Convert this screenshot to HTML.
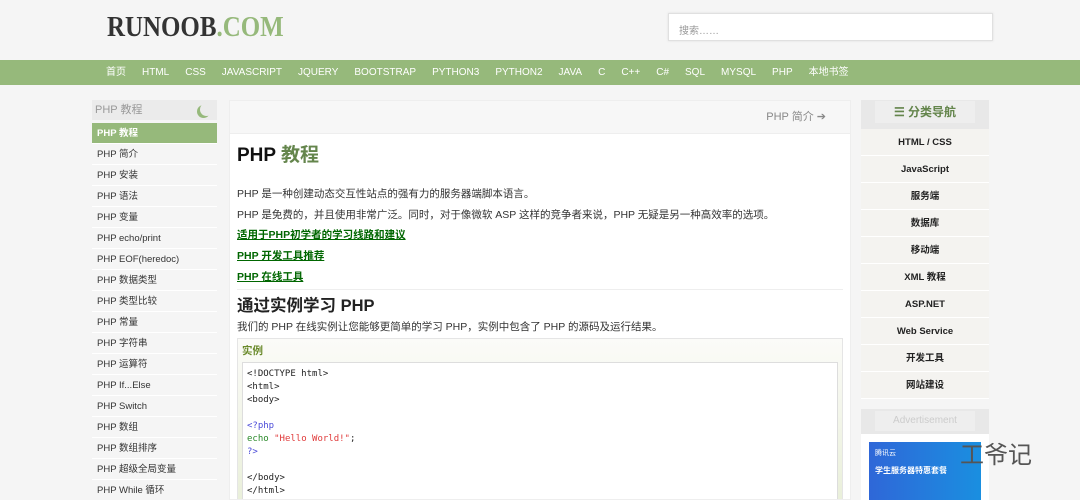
<!DOCTYPE html>
<html><head><meta charset="utf-8"><style>
*{margin:0;padding:0;box-sizing:border-box}
html,body{width:1080px;height:500px;overflow:hidden}
body{background:#f5f5f5;font-family:"Liberation Sans","Noto Sans CJK SC",sans-serif;font-size:12px;color:#333;position:relative}
.logo{position:absolute;left:107px;top:11px;font-family:"Liberation Serif","Noto Serif CJK SC",serif;font-weight:bold;font-size:29px;color:#333;transform:scaleX(0.86);transform-origin:left top}
.logo span{color:#96b97b}
.search{position:absolute;left:668px;top:13px;width:325px;height:28px;background:#fff;border:1px solid #e0e0e0;box-shadow:0 0 2px #ddd;font-size:10px;color:#999;padding:8px 10px}
.nav{position:absolute;left:0;top:60px;width:1080px;height:25px;background:#96b97b;color:#fff;font-size:10px;line-height:25px;white-space:nowrap;padding-left:106px}
.nav span{margin-right:16px}
.left{position:absolute;left:92px;top:100px;width:125px}
.left .hd{height:20px;background:#ebebeb;color:#999;font-size:11px;line-height:20px;padding-left:3px;position:relative}
.left .hd i{position:absolute;right:4px;top:3px;width:13px;height:13px;border-radius:50%;box-shadow:-3px 2px 0 0 #96b97b}
.left a{display:block;height:21px;line-height:21px;font-size:9.5px;color:#333;padding-left:5px;border-bottom:1px solid #fff}
.left a.on{background:#96b97b;color:#fff;font-weight:bold;margin-top:3px}
.main{position:absolute;left:229px;top:100px;width:622px;height:400px;background:#fff;border:1px solid #eee;overflow:hidden}
.top{height:33px;background:#f7f7f7;border-bottom:1px solid #eee;text-align:right;padding-right:24px;line-height:33px;color:#888;font-size:11px}
.c{padding:0 7px}
h1{font-size:19px;margin-top:10px;color:#111;line-height:24px}
h1 span{color:#64854c}
p{font-size:10.5px;margin-top:7px;line-height:14px}
.lk{display:block;font-size:10.5px;font-weight:bold;color:#006600;text-decoration:underline;margin-top:7px;line-height:14px}
h2{font-size:16.5px;margin-top:5px;padding-top:6px;border-top:1px solid #eee;color:#222;line-height:20px}
.ex{margin-top:4px;border:1px solid #e5e5e5;background:linear-gradient(#fbfbf8,#e9efd9);height:170px;padding:4px 4px 0 4px}
.ex b{color:#6a8a2b;font-size:10.5px}
.code{background:#fff;border:1px solid #ddd;margin-top:4px;height:150px;font-family:"DejaVu Sans Mono",monospace;font-size:9px;line-height:13px;padding:5px 4px;white-space:pre;color:#222}
.right{position:absolute;left:861px;top:100px;width:128px}
.rh{height:29px;background:#e8e8e8;padding:1px 14px}
.rh div{background:#eee;height:22px;text-align:center;color:#64854c;font-weight:bold;font-size:12px;line-height:22px}
.right a{display:block;height:27px;line-height:27px;text-align:center;font-size:9.5px;font-weight:bold;color:#222;background:#f4f3f0;border-bottom:1px solid #fff}
.ad{margin-top:10px;height:25px;background:#e8e8e8;padding:2px 14px}
.ad div{background:#eee;text-align:center;color:#ccc;font-size:10px;line-height:20px}
.adimg{background:#fff;height:70px;padding:8px 8px 0}
.adimg div{background:linear-gradient(90deg,#2f67d8,#1a8fe0);height:62px;color:#fff;font-size:7px;padding:6px 6px}
.wm{position:absolute;left:960px;top:435px;font-size:24px;color:#555;font-family:"Noto Sans CJK SC",sans-serif}
</style></head><body>
<div class="logo">RUNOOB<span>.COM</span></div>
<div class="search">搜索……</div>
<div class="nav"><span>首页</span><span>HTML</span><span>CSS</span><span>JAVASCRIPT</span><span>JQUERY</span><span>BOOTSTRAP</span><span>PYTHON3</span><span>PYTHON2</span><span>JAVA</span><span>C</span><span>C++</span><span>C#</span><span>SQL</span><span>MYSQL</span><span>PHP</span><span>本地书签</span></div>
<div class="left"><div class="hd">PHP 教程<i></i></div>
<a class="on">PHP 教程</a><a>PHP 简介</a><a>PHP 安装</a><a>PHP 语法</a><a>PHP 变量</a><a>PHP echo/print</a><a>PHP EOF(heredoc)</a><a>PHP 数据类型</a><a>PHP 类型比较</a><a>PHP 常量</a><a>PHP 字符串</a><a>PHP 运算符</a><a>PHP If...Else</a><a>PHP Switch</a><a>PHP 数组</a><a>PHP 数组排序</a><a>PHP 超级全局变量</a><a>PHP While 循环</a></div>
<div class="main"><div class="top">PHP 简介 ➔</div><div class="c">
<h1>PHP <span>教程</span></h1>
<p style="margin-top:19px">PHP 是一种创建动态交互性站点的强有力的服务器端脚本语言。</p>
<p>PHP 是免费的，并且使用非常广泛。同时，对于像微软 ASP 这样的竞争者来说，PHP 无疑是另一种高效率的选项。</p>
<a class="lk" style="margin-top:6px">适用于PHP初学者的学习线路和建议</a>
<a class="lk">PHP 开发工具推荐</a>
<a class="lk">PHP 在线工具</a>
<h2>通过实例学习 PHP</h2>
<p style="margin-top:4px">我们的 PHP 在线实例让您能够更简单的学习 PHP，实例中包含了 PHP 的源码及运行结果。</p>
<div class="ex"><b>实例</b><div class="code">&lt;!DOCTYPE html&gt;
&lt;html&gt;
&lt;body&gt;

<span style="color:#4b4bd8">&lt;?php</span>
<span style="color:#2a8a2a">echo</span> <span style="color:#e03b3b">"Hello World!"</span>;
<span style="color:#4b4bd8">?&gt;</span>

&lt;/body&gt;
&lt;/html&gt;</div></div>
</div></div>
<div class="right"><div class="rh"><div>☰ 分类导航</div></div>
<a>HTML / CSS</a><a>JavaScript</a><a>服务端</a><a>数据库</a><a>移动端</a><a>XML 教程</a><a>ASP.NET</a><a>Web Service</a><a>开发工具</a><a>网站建设</a>
<div class="ad"><div>Advertisement</div></div>
<div class="adimg"><div>腾讯云<br><br><b style="font-size:8px">学生服务器特惠套餐</b></div></div></div>
<div class="wm">工爷记</div>
</body></html>
